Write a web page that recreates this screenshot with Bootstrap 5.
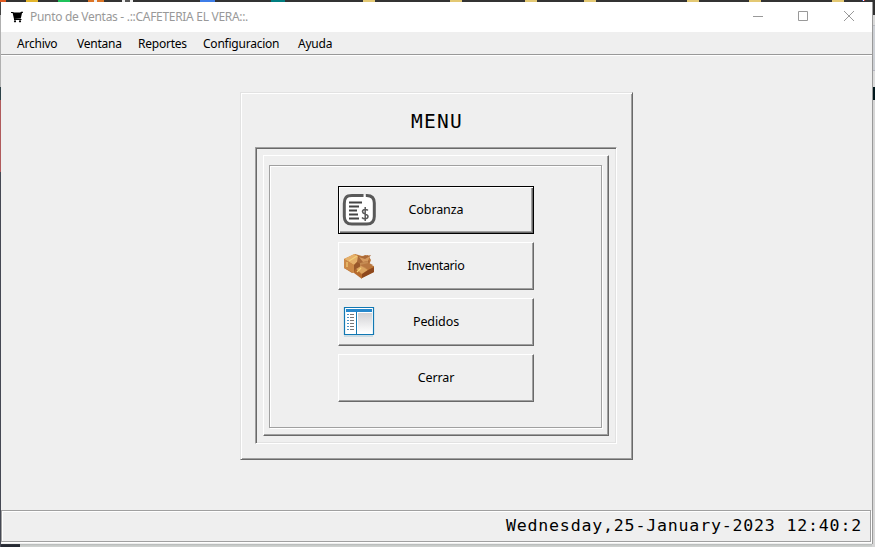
<!DOCTYPE html>
<html lang="es">
<head>
<meta charset="utf-8">
<meta name="viewport" content="width=device-width, initial-scale=1">
<title>Punto de Ventas</title>
<link href="https://cdn.jsdelivr.net/npm/bootstrap@5.3.0/dist/css/bootstrap.min.css" rel="stylesheet">
<style>
body{width:875px;height:547px;overflow:hidden;font-family:"Noto Sans","Open Sans",sans-serif;font-size:12px;line-height:1;color:#000;
background:
linear-gradient(#e05a20,#e05a20) 0 0/6px 2px no-repeat,
linear-gradient(#e3b52c,#e3b52c) 26px 0/12px 2px no-repeat,
linear-gradient(#1fc25b,#1fc25b) 58px 0/12px 2px no-repeat,
linear-gradient(90deg,#dc7425 6px,#eee 6px 9px,#dc7425 9px) 88px 0/16px 2px no-repeat,
linear-gradient(90deg,#eee 3px,#555 3px 8px,#eee 8px) 122px 0/11px 2px no-repeat,
linear-gradient(#3d7de8,#3d7de8) 200px 0/15px 2px no-repeat,
linear-gradient(#007e80,#007e80) 271px 0/14px 2px no-repeat,
linear-gradient(#e3c873,#e3c873) 363px 0/12px 2px no-repeat,
linear-gradient(#e3c873,#e3c873) 450px 0/12px 2px no-repeat,
linear-gradient(#e3c873,#e3c873) 525px 0/12px 2px no-repeat,
linear-gradient(#e3c873,#e3c873) 584px 0/12px 2px no-repeat,
linear-gradient(#e3c873,#e3c873) 687px 0/12px 2px no-repeat,
linear-gradient(#e3c873,#e3c873) 749px 0/12px 2px no-repeat,
linear-gradient(#e3c873,#e3c873) 832px 0/12px 2px no-repeat,
linear-gradient(90deg,#3355cc 1px,#fff 1px 2px,#d33 2px) 862px 0/3px 1px no-repeat,
linear-gradient(#333,#333) 0 0/875px 2px no-repeat,
linear-gradient(#303030 15px,#d9d9d9 15px 25px,#b9bbc0 25px 26px,#cdd0d5 26px 70px,#b5b5c0 70px 71px,#dcdcdc 71px 87px,#00171c 87px 100px,#d6d6d6 100px) 872px 0/3px 547px no-repeat,
linear-gradient(#444 15px,#b0b0b0 15px 87px,#2d4148 87px 100px,#b05a5c 100px 172px,#454853 172px) 0 0/1px 547px no-repeat,
linear-gradient(#4c4f55,#262a33 2px) 0 543px/20px 4px no-repeat,
linear-gradient(#a8acac,#ced1cf 3px) 0 543px/875px 4px no-repeat}
.app-window{width:872px;height:542px;margin:2px 0 0 1px;background:#efefef;border-right:1px solid #999}
.caption-bar{height:30px;background:#fff;color:#999;padding-left:10px}
.caption-icon{margin-right:7px}
.caption-text{font-size:12px;letter-spacing:-.3px;white-space:nowrap}
.menu-strip{height:23px;border-bottom:1px solid #999;padding:1px 0 0 16px;box-shadow:0 1px #fff;white-space:nowrap}
.menu-strip span{letter-spacing:-.23px}
.workspace{height:455px;padding-top:37px}
.raised-frame{width:393px;height:368px;border:1px solid;border-color:#e2e2e2 #696969 #696969 #e2e2e2;box-shadow:inset 1px 1px #fff,inset -1px -1px #a0a0a0;padding:0 14px}
.frame-title{height:54px;padding:4px 0 0 1px;font:19.5px/1 "DejaVu Sans Mono",monospace;letter-spacing:1.3px}
.sunken-frame{width:362px;height:297px;border:1px solid;border-color:#a0a0a0 #fff #fff #a0a0a0;box-shadow:inset 1px 1px #696969,inset -1px -1px #e2e2e2;padding:7px}
.ridge-frame{width:346px;height:281px;border:1px solid;border-color:#fff #696969 #696969 #fff;box-shadow:inset -1px -1px #a0a0a0;padding:9px 5px}
.etched-frame{width:333px;height:263px;border:1px solid #a0a0a0;box-shadow:inset 1px 1px #fff,1px 1px #fff;padding-top:20px}
.tool-button{width:196px;height:48px;border:1px solid;border-color:#fff #696969 #696969 #fff;box-shadow:inset -1px -1px #a0a0a0;background:#efefef;padding:0 0 0 3px;font-size:12.5px;letter-spacing:-.1px;color:#000}
.tool-button.is-default{border-color:#000;box-shadow:inset 1px 1px #fff,inset -1px -1px #696969,inset -2px -2px #a0a0a0}
.tool-button svg,.icon-gap{width:34px;height:34px;flex:none}
.tool-button span{flex:1;padding-right:36px;text-align:center}
.tool-button .long-label{letter-spacing:-.38px}
.status-strip{height:32px;width:870px;border:1px solid #a0a0a0;box-shadow:inset 1px 1px #fff,1px 1px #fff;padding:1px 8px 0 0;font:16.6px/1 "DejaVu Sans Mono",monospace;letter-spacing:.8px}
</style>
</head>
<body>
<main class="app-window d-flex flex-column">
<header class="caption-bar d-flex align-items-center">
<svg width="12" height="12" viewBox="0 0 12 12" class="caption-icon"><path d="M0 1.500h2.500M3 8.500h7.500" fill="none" stroke="#000"/><path d="M1.500 1.500h7.800L10 .7h2v1l-1 .3L9.800 7.500 3 8z"/><circle cx="4" cy="10.300" r="1.100"/><circle cx="9" cy="10.300" r="1.100"/></svg>
<span class="caption-text">Punto de Ventas - .::CAFETERIA EL VERA::.</span>
<svg class="ms-auto" width="132" height="30" fill="none" stroke="#999" viewBox="740 2 132 30"><path d="M753 16.500h10M798.500 11.500h9v9h-9zM844 11l10 10M854 11l-10 10"/></svg>
</header>
<nav class="menu-strip d-flex align-items-center flex-shrink-0">
<span style="width:60px">Archivo</span><span style="width:61px">Ventana</span><span style="width:65px">Reportes</span><span style="width:95px">Configuracion</span><span>Ayuda</span>
</nav>
<section class="workspace d-flex justify-content-center align-items-start flex-shrink-0">
<div class="raised-frame">
<h1 class="frame-title d-flex align-items-center justify-content-center m-0">MENU</h1>
<div class="sunken-frame"><div class="ridge-frame"><div class="etched-frame d-flex flex-column align-items-center gap-2">
<button class="tool-button is-default btn rounded-0 d-flex align-items-center">
<svg viewBox="0 0 34 34"><path d="M21.500 2.500H10C4 2.500 2.300 5 2.300 10.500v13c0 5 2 7.500 7.500 7.500h15c5.500 0 7.500-2.500 7.500-7.500V10c0-5-2-7.500-7.500-7.500h-1" fill="#fff" stroke="#595959" stroke-width="3"/><path d="M7 9.500h13M7 13.500h10M7 17.500h8M7 21.500h9M7 25.500h10" stroke="#444" stroke-width="2"/><path d="M25.800 17.500c-1-1.700-5.300-1.500-5.300 1.200 0 2.800 5.500 1.800 5.500 4.800 0 2.500-4.300 3-6 1M23.200 14v14" fill="none" stroke="#595959" stroke-width="1.500"/></svg><span>Cobranza</span></button>
<button class="tool-button btn rounded-0 d-flex align-items-center">
<svg viewBox="0 0 34 34"><path d="M2 10l11-5 7 2 6-1 3 5-2 5 5 1v6l-12 6-7-6-3 1-8-5z" fill="#bd7738"/><path d="M2 10l10-5 7 4-7 7z" fill="#e5b06a"/><path d="M2 10l10 6v8L2 19z" fill="#cc8947"/><path d="M12 16l7-7v10l-7 5z" fill="#99582a"/><path d="M16 7l5 1 2-2 2 1 4-1-3 4 2 3-8 3-5-3z" fill="#a96939"/><path d="M17 8l6 2 5-3-2 5-5 1z" fill="#d69b5f"/><path d="M18 14l8-2v7l-8 2z" fill="#c58b52"/><path d="M14 20l5-3 7 4-6 4z" fill="#dca35e"/><path d="M13 20l7 6v4l-8-6z" fill="#b76b2d"/><path d="M20 25l6-4 6-3v5l-12 6z" fill="#8e481d"/><path d="M18 16l8 4 5-4-4-2z" fill="#b87740"/><path d="M5 13v5M7 12l8-5M15 23l4-4" stroke="#f3cf78" stroke-width="1.200"/></svg><span class="long-label">Inventario</span></button>
<button class="tool-button btn rounded-0 d-flex align-items-center">
<svg viewBox="0 0 34 34"><defs><linearGradient id="pane" x2="0" y2="1"><stop stop-color="#d2d2d5"/><stop offset="1" stop-color="#fff"/></linearGradient></defs><path d="M2 31h29" stroke="#a8c8d8"/><path d="M2.500 2.500h29v27h-29z" fill="#fff" stroke="#1178b3" stroke-width="1.200"/><path d="M4 4h26v3H4z" fill="#2788cc"/><path d="M16 8h14v20H16z" fill="url(#pane)"/><path d="M14.500 7v22" stroke="#1679b3"/><path d="M5 9.500h2m-2 3h2m-2 3h2m-2 3h2m-2 3h2m-2 3h2" stroke="#4d93c5"/><path d="M8 9.500h4m-4 3h4m-4 3h4m-4 3h4m-4 3h4m-4 3h4" stroke="#777"/></svg><span>Pedidos</span></button>
<button class="tool-button btn rounded-0 d-flex align-items-center"><i class="icon-gap"></i><span>Cerrar</span></button>
</div></div></div>
</div>
</section>
<footer class="status-strip d-flex align-items-center justify-content-end flex-shrink-0">Wednesday,25-January-2023 12:40:2</footer>
</main>
<script src="https://cdn.jsdelivr.net/npm/bootstrap@5.3.0/dist/js/bootstrap.bundle.min.js"></script>
</body>
</html>
